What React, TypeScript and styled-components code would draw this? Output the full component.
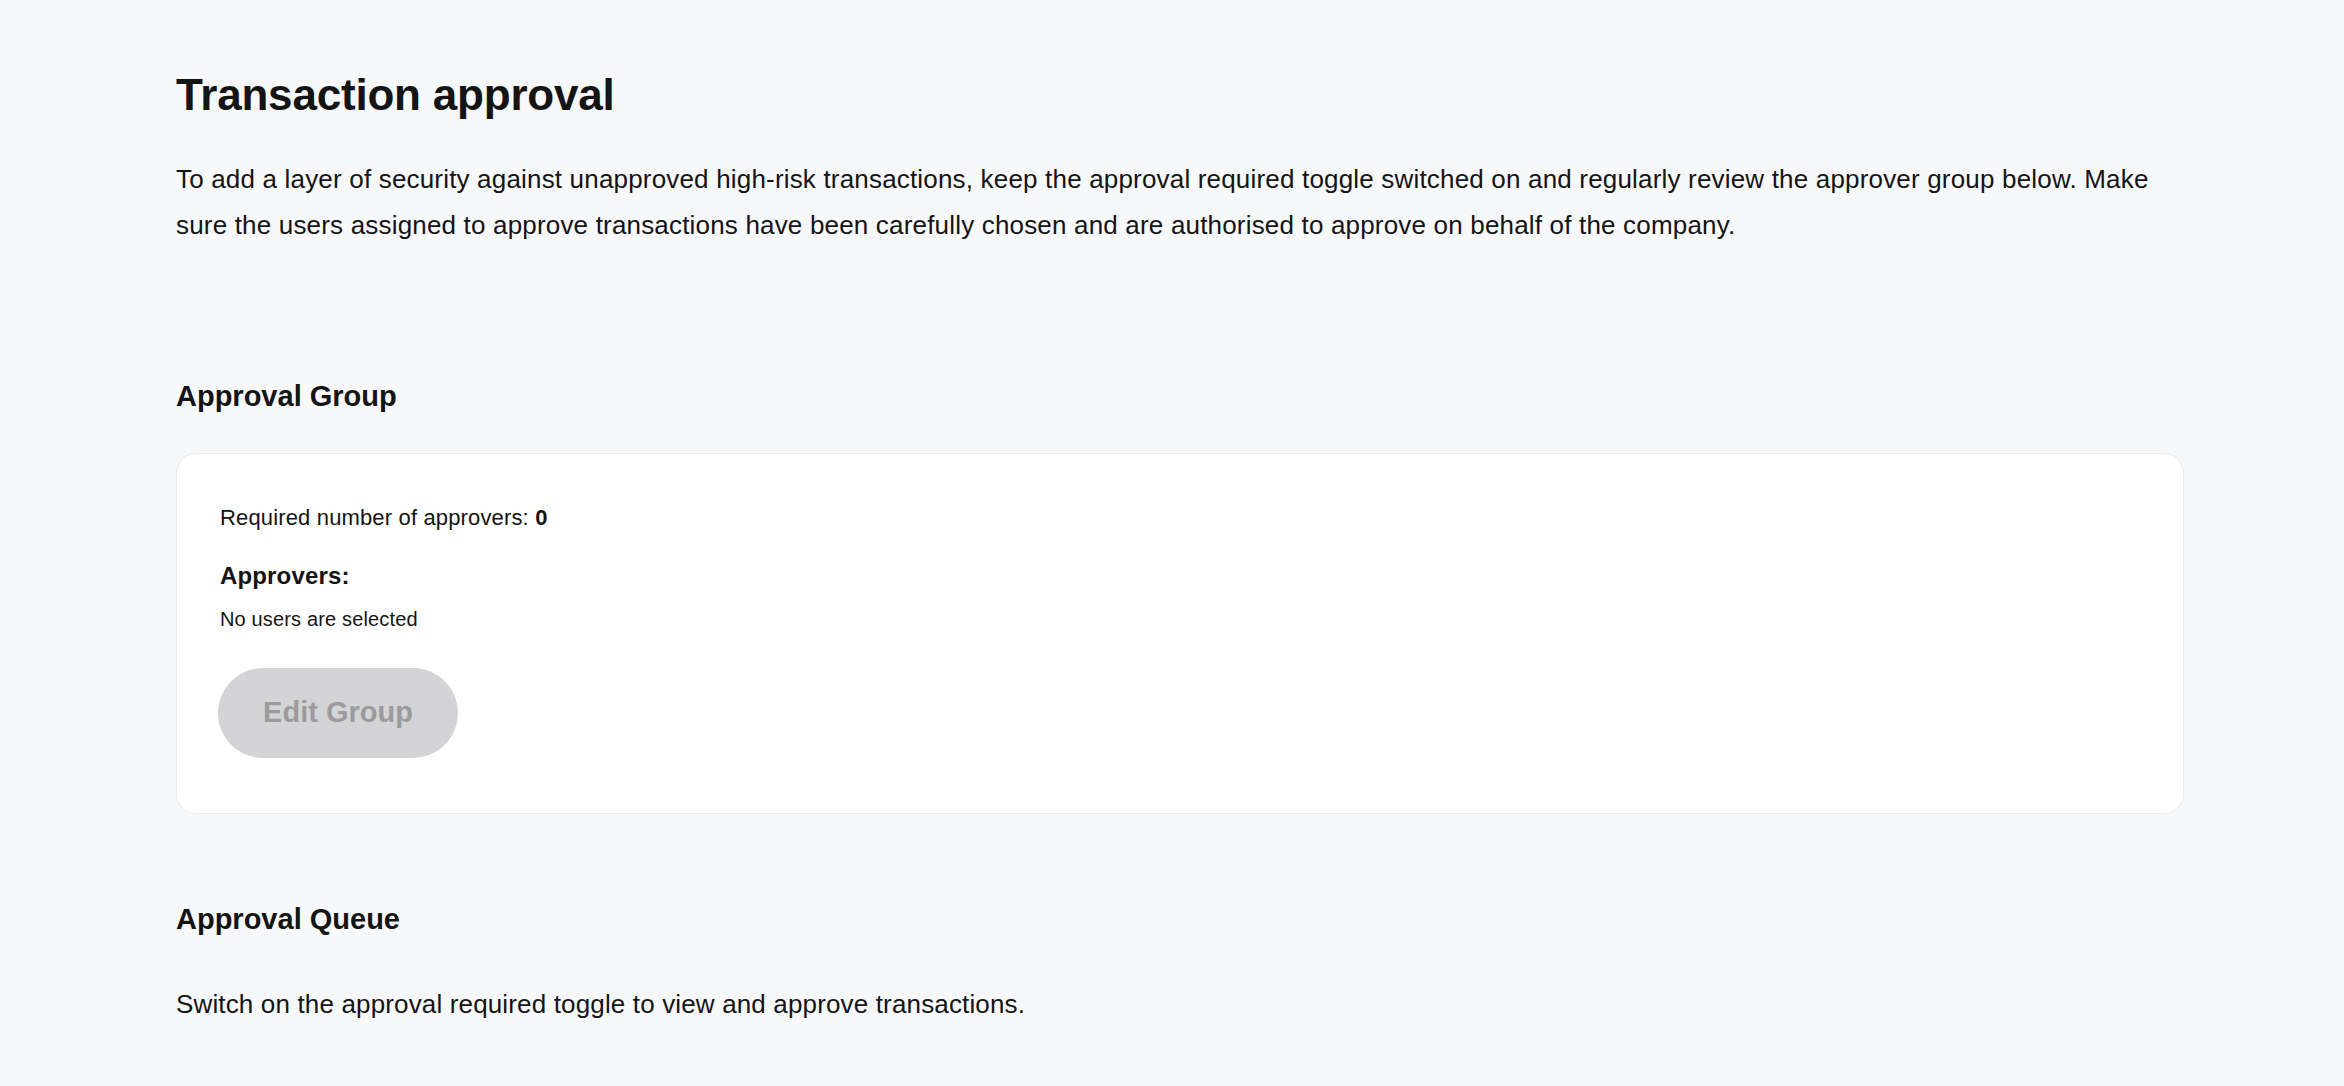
import React from "react";
import styled, { createGlobalStyle } from "styled-components";

const GlobalStyle = createGlobalStyle`
  html, body {
    margin: 0;
    padding: 0;
    background: #f7f8fa;
  }
  body {
    font-family: "Liberation Sans", Arial, sans-serif;
    color: #141414;
  }
  * { box-sizing: border-box; }
`;

const Page = styled.main`
  min-height: 1086px;
  padding: 69px 160px 40px 176px;
  background: #f7f8fa;
`;

const Title = styled.h1`
  margin: 0;
  font-size: 44px;
  line-height: 52.8px;
  font-weight: 700;
  letter-spacing: -0.2px;
  color: #141414;
`;

const Intro = styled.p`
  margin: 34px 0 0;
  font-size: 26px;
  line-height: 46px;
  letter-spacing: 0.18px;
  color: #141414;
`;

const SectionTitle = styled.h2<{ $top: number }>`
  margin: ${(p) => p.$top}px 0 0;
  font-size: 29px;
  line-height: 36px;
  font-weight: 700;
  color: #141414;
`;

const Card = styled.section`
  margin-top: 39px;
  background: #ffffff;
  border: 1px solid #ebebed;
  border-radius: 20px;
  padding: 47px 43px 55px;
  display: flex;
  flex-direction: column;
  align-items: flex-start;
`;

const InfoLine = styled.div`
  font-size: 22px;
  line-height: 33px;
  letter-spacing: 0.15px;
  color: #141414;

  strong {
    font-weight: 700;
  }
`;

const Label = styled.div`
  margin-top: 24px;
  font-size: 24px;
  line-height: 36px;
  font-weight: 700;
  letter-spacing: 0.15px;
  color: #141414;
`;

const Muted = styled.div`
  margin-top: 10px;
  font-size: 20px;
  line-height: 30px;
  letter-spacing: 0.15px;
  color: #141414;
`;

const PillButton = styled.button`
  margin-top: 34px;
  margin-left: -2px;
  height: 90px;
  width: 240px;
  padding: 0;
  border: none;
  border-radius: 45px;
  background: #d4d4d6;
  color: #9b9b9d;
  font-family: "Liberation Sans", Arial, sans-serif;
  font-size: 29px;
  font-weight: 700;
  cursor: not-allowed;
`;

const QueueText = styled.p`
  margin: 44px 0 0;
  font-size: 26px;
  line-height: 46px;
  letter-spacing: 0.15px;
  color: #141414;
`;

export default function App() {
  return (
    <>
      <GlobalStyle />
      <Page>
        <Title>Transaction approval</Title>
        <Intro>
          To add a layer of security against unapproved high-risk transactions, keep the approval
          required toggle switched on and regularly review the approver group below. Make sure the
          users assigned to approve transactions have been carefully chosen and are authorised to
          approve on behalf of the company.
        </Intro>

        <SectionTitle $top={130}>Approval Group</SectionTitle>
        <Card>
          <InfoLine>
            Required number of approvers: <strong>0</strong>
          </InfoLine>
          <Label>Approvers:</Label>
          <Muted>No users are selected</Muted>
          <PillButton disabled>Edit Group</PillButton>
        </Card>

        <SectionTitle $top={87}>Approval Queue</SectionTitle>
        <QueueText>Switch on the approval required toggle to view and approve transactions.</QueueText>
      </Page>
    </>
  );
}
